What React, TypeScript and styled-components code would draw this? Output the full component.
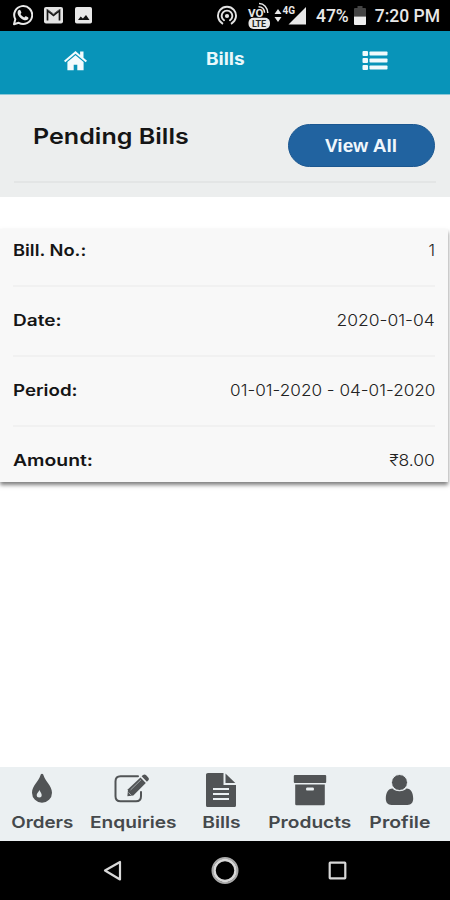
import React from 'react';
import styled, { createGlobalStyle } from 'styled-components';

const Global = createGlobalStyle`
  * { box-sizing: border-box; }
  body { margin: 0; background: #fff; font-family: Inter, 'Liberation Sans', sans-serif; }
  svg { display: block; flex: none; }
`;
const Screen = styled.div`
  width: 450px;
  height: 900px;
  display: flex;
  flex-direction: column;
  background: #fff;
  overflow: hidden;
`;
const Text = styled.span<{ $size: number; $weight: number; $color?: string; $stretch?: number; $origin?: string }>`
  display: inline-block;
  white-space: nowrap;
  font-size: ${p => p.$size}px;
  line-height: 1.2;
  font-weight: ${p => p.$weight};
  color: ${p => p.$color ?? '#151515'};
  transform: scaleX(${p => p.$stretch ?? 1});
  transform-origin: ${p => p.$origin ?? 'center'};
`;
const StatusBar = styled.div`
  height: 31px;
  flex: none;
  background: #000;
  display: flex;
  justify-content: space-between;
  padding: 0 10px 0 12px;
`;
const Cluster = styled.div<{ $gap: number }>`
  display: flex;
  align-items: flex-start;
  gap: ${p => p.$gap}px;
`;
const StatusText = styled.span`
  font: 500 17.5px/32px Roboto, sans-serif;
  color: #e8e8e8;
  white-space: nowrap;
`;
const Header = styled.header`
  height: 64px;
  flex: none;
  background: #0894b9;
  border-bottom: 1px solid #8ac7d7;
  display: grid;
  grid-template-columns: repeat(3, 150px);
  justify-items: center;
  align-items: start;
  padding-top: 18px;
`;
const Pending = styled.section`
  height: 102px;
  flex: none;
  background: #eceeee;
  padding: 29px 14px 0;
`;
const PendingRow = styled.div`
  height: 59px;
  display: flex;
  justify-content: space-between;
  align-items: flex-start;
  padding-left: 19px;
  border-bottom: 2px solid #e3e5e5;
`;
const Title = styled.h1`
  margin: -1px 0 0;
  font-size: 22px;
  line-height: 1.2;
  display: flex;
`;
const ViewAll = styled.button`
  width: 147px;
  height: 43px;
  margin-right: 1px;
  border: 1px solid #1b5790;
  border-radius: 22px;
  background: #2163a0;
  padding: 2px 0 0;
  display: flex;
  align-items: center;
  justify-content: center;
`;
const Card = styled.section`
  width: 448px;
  height: 253px;
  flex: none;
  margin-top: 32px;
  background: #f8f8f8;
  padding: 0 13px;
  box-shadow: 0 3px 4px rgba(0, 0, 0, 0.5);
`;
const Row = styled.div`
  height: 70px;
  display: flex;
  justify-content: space-between;
  align-items: baseline;
  padding-top: 24px;
  border-bottom: 2px solid #f1f1f1;
  &:first-child { height: 58px; padding-top: 12px; }
  &:last-child { height: 55px; border-bottom: 0; }
`;
const Spacer = styled.div`flex: 1;`;
const TabBar = styled.nav`
  height: 74px;
  flex: none;
  background: #ebf0f2;
  display: grid;
  grid-template-columns: 84px 98px 78px 100px 79px;
`;
const Tab = styled.div`
  display: flex;
  flex-direction: column;
  align-items: center;
  gap: 3.5px;
  padding-top: 2px;
`;
const SystemNav = styled.div`
  height: 59px;
  flex: none;
  background: #000;
  display: grid;
  grid-template-columns: 24px 28px 20px;
  gap: 88px;
  justify-content: center;
  align-items: center;
  padding-right: 4px;
`;

const WhatsApp = () => (
  <svg width="21" height="31" viewBox="0 0 21 31" fill="none">
    <path d="M2 24.2 3.3 19.3A9 9 0 1 1 6.7 22.8Z" stroke="#e8e8e8" strokeWidth="2" strokeLinejoin="round" />
    <path d="M6.5 10.3c.8-.8 1.6-.7 2 .2l.8 1.8c.2.5-.1.9-.8 1.7 1 1.8 2 2.6 3.8 3.4.8-1 1.2-1.4 1.7-1.1l2 1c.8.4.5 1.6-.3 2.3-1.8 1.4-4.7.5-7.2-1.7-2.6-2.4-3.9-5.6-2-7.6Z" fill="#e8e8e8" />
  </svg>
);
const Mail = () => (
  <svg width="20" height="31" viewBox="0 0 20 31" fill="none">
    <rect x="0" y="7" width="19" height="16.5" rx="2" fill="#e3e3e3" />
    <path d="M3.5 20.5V10.5l6 5 6-5v10" stroke="#171717" strokeWidth="1.7" />
    <path d="m3.5 9.5 6 4.500 6-4.500" stroke="#555" strokeWidth="1" />
  </svg>
);
const Picture = () => (
  <svg width="18" height="31" viewBox="0 0 18 31">
    <rect x="0" y="7" width="17" height="16.5" rx="1.8" fill="#e8e8e8" />
    <path d="m3 20 2.7-3.6 2.2 2.1 3.1-3.5 3.5 5Z" fill="#111" />
  </svg>
);
const Hotspot = () => (
  <svg width="20" height="31" viewBox="0 0 20 31" fill="none" stroke="#e3e3e3" strokeWidth="1.9" strokeLinecap="round">
    <path d="M5.3 23.4a9 9 0 1 1 9.4 0M7 20.3a5.3 5.3 0 1 1 6 0" />
    <circle cx="10" cy="16" r="2.1" fill="#e3e3e3" stroke="none" />
  </svg>
);
const TinyLabel = styled.text`
  font-family: Roboto, sans-serif;
  font-weight: 700;
`;
const VoLte = () => (
  <svg width="24" height="31" viewBox="0 0 24 31" fill="none">
    <TinyLabel x="1" y="17" fontSize="11.5" fill="#e8e8e8">VO</TinyLabel>
    <path d="M12 3.5c5 0 8.5 4 8.8 9.5M11.5 6.8c3.5 0 5.8 2.5 6.1 6" stroke="#e8e8e8" strokeWidth="1.5" />
    <rect x="1.5" y="17.8" width="21.5" height="11.2" rx="5" fill="#e8e8e8" />
    <TinyLabel x="5" y="26.8" fontSize="9" fill="#222" textLength="14">LTE</TinyLabel>
  </svg>
);
const Signal = () => (
  <svg width="33" height="31" viewBox="0 0 33 31" fill="#e8e8e8">
    <path d="m4 9 3.5 5h-7ZM4 22l3.5-5h-7ZM32 7v17.5H14.5Z" />
    <TinyLabel x="8.5" y="14" fontSize="10" textLength="12.5">4G</TinyLabel>
  </svg>
);
const Battery = () => (
  <svg width="12" height="31" viewBox="0 0 12 31">
    <path d="M3.5 6h5v2H11q1 0 1 1v7.5H0V9q0-1 1-1h2.5Z" fill="#444" />
    <path d="M0 16.5h12V24q0 1-1 1H1q-1 0-1-1Z" fill="#eee" />
  </svg>
);
const Home = () => (
  <svg width="24" height="22" viewBox="0 0 24 22" fill="#f3fbfd">
    <path d="M12.500 2 1 11.700l1.300 1.500L12.500 4.700l10.200 8.500 1.300-1.500-3.500-3V2.500h-3.400v3.400Z" />
    <path d="m12.500 6.200-8.100 6.800v8.200h6.300v-5.500h3.600v5.500h6.300V13Z" />
  </svg>
);
const List = () => (
  <svg width="26" height="23" viewBox="0 0 26 23" fill="#f0fafc">
    {[2, 9, 16].map(y => (
      <g key={y}>
        <rect x="0.5" y={y} width="5.5" height="5" rx="1" />
        <rect x="7.5" y={y + 0.5} width="18" height="4" rx="0.8" />
      </g>
    ))}
  </svg>
);
const Drop = () => (
  <svg width="22" height="40" viewBox="0 0 22 40">
    <path d="M11 4.800c1 0 1.300.7 1.700 2 1.600 5.600 8.300 10.200 8.300 17a10 10 0 0 1-20 0c0-6.800 6.700-11.400 8.300-17 .4-1.300.7-2 1.700-2Z" fill="#515456" />
    <path d="M8.500 21c.5 1.900 2.200 3 2.200 5a2.500 2.500 0 0 1-5 0c0-2 2.200-3.100 2.800-5Z" fill="#e4eaec" />
  </svg>
);
const Edit = () => (
  <svg width="38" height="40" viewBox="0.5 0 38 40" fill="none">
    <path d="M24.500 7.200H7q-5 0-5 5v15.100q0 5 5 5h15.500q5 0 5-5V23" stroke="#515456" strokeWidth="2" strokeLinecap="round" />
    <path d="M14.500 20.300 27 8.400l5.300 5.500-12.500 12.500-5.900.8Z" fill="#515456" />
    <path d="m28.100 7.300 1.400-1.200c1.200-1 2.200-.8 3.200.2l2 2.100c.9 1 1 2 0 3l-1.300 1.400Z" fill="#515456" />
    <path d="m17 21 10.500-10.200M15 23.500l3 3" stroke="#a2a7aa" strokeWidth="1" />
  </svg>
);
const Document = () => (
  <svg width="30" height="40" viewBox="0 0 30 40">
    <path d="M2 4h15.500v12H30v20.500q0 1.500-1.500 1.500h-27Q0 38 0 36.500V5.500Q0 4 2 4Z" fill="#515456" />
    <path d="M19.500 4.500 29.300 14h-9.800Z" fill="#515456" />
    <path d="M7 20h16M7 25h16M7 30h16" stroke="#ebf0f2" strokeWidth="2" />
  </svg>
);
const Archive = () => (
  <svg width="34" height="40" viewBox="0 0 34 40" fill="#515456">
    <rect x="0.8" y="6" width="32.4" height="8" rx="1" />
    <path fillRule="evenodd" d="M2.200 15.500h29.600V35q0 1.300-1.300 1.300H3.500q-1.300 0-1.300-1.300ZM14 18.500q-1 0-1 1.500t1 1.500h6q1 0 1-1.500t-1-1.500Z" />
  </svg>
);
const User = () => (
  <svg width="29" height="40" viewBox="0 0 29 40" fill="#515456">
    <path d="M7.500 19.500c1.800 1.700 4 2.700 7 2.700s5.200-1 7-2.700c4.500 0 6.700 4.300 6.700 10.300 0 3.800-2.200 6.200-5.700 6.200h-16C3 36 .8 33.600.8 29.800c0-6 2.200-10.300 6.700-10.300Z" />
    <circle cx="14.5" cy="13.5" r="8" stroke="#ebf0f2" strokeWidth="1" />
  </svg>
);

const bill: { label: string; stretch: number; value: string; valueStretch: number }[] = [
  { label: 'Bill. No.:', stretch: 1.145, value: '1', valueStretch: 1 },
  { label: 'Date:', stretch: 1.19, value: '2020-01-04', valueStretch: 1.06 },
  { label: 'Period:', stretch: 1.17, value: '01-01-2020 - 04-01-2020', valueStretch: 1.04 },
  { label: 'Amount:', stretch: 1.21, value: '₹8.00', valueStretch: 1.06 },
];
const tabs = [
  { label: 'Orders', stretch: 1.14, Icon: Drop },
  { label: 'Enquiries', stretch: 1.16, Icon: Edit },
  { label: 'Bills', stretch: 1.17, Icon: Document },
  { label: 'Products', stretch: 1.16, Icon: Archive },
  { label: 'Profile', stretch: 1.18, Icon: User },
];

export default function App() {
  return (
    <Screen>
      <Global />
      <StatusBar>
        <Cluster $gap={11}><WhatsApp /><Mail /><Picture /></Cluster>
        <Cluster $gap={9}>
          <Cluster $gap={10}><Hotspot /><Cluster $gap={3}><VoLte /><Signal /></Cluster></Cluster>
          <Cluster $gap={5}><StatusText>47%</StatusText><Battery /></Cluster>
          <StatusText>7:20 PM</StatusText>
        </Cluster>
      </StatusBar>
      <Header>
        <Home />
        <Text $size={17} $weight={700} $color="#e9f8fb" $stretch={1.12}>Bills</Text>
        <List />
      </Header>
      <Pending>
        <PendingRow>
          <Title><Text $size={22} $weight={600} $stretch={1.14} $origin="left">Pending Bills</Text></Title>
          <ViewAll><Text $size={18} $weight={700} $color="#f0f7fc" $stretch={1.06}>View All</Text></ViewAll>
        </PendingRow>
      </Pending>
      <Card>
        {bill.map(b => (
          <Row key={b.label}>
            <Text $size={16} $weight={600} $stretch={b.stretch} $origin="left">{b.label}</Text>
            <Text $size={16.5} $weight={300} $color="#222" $stretch={b.valueStretch} $origin="right">{b.value}</Text>
          </Row>
        ))}
      </Card>
      <Spacer />
      <TabBar>
        {tabs.map(({ label, stretch, Icon }) => (
          <Tab key={label}>
            <Icon />
            <Text $size={16.5} $weight={600} $color="#45494c" $stretch={stretch}>{label}</Text>
          </Tab>
        ))}
      </TabBar>
      <SystemNav>
        <svg width="24" height="28" viewBox="0 0 24 28" fill="none"><path d="M21 5v17.500L6 13.500Z" stroke="#d8d8d8" strokeWidth="2.2" strokeLinejoin="round" /></svg>
        <svg width="28" height="28" viewBox="0 0 28 28" fill="none" stroke="#d8d8d8"><circle cx="14" cy="13.5" r="12.5" stroke="#aaa" strokeWidth="2" /><circle cx="14" cy="13.5" r="10.5" strokeWidth="2.5" /></svg>
        <svg width="20" height="28" viewBox="0 0 20 28" fill="none"><rect x="2.7" y="5.7" width="15.6" height="15.6" rx="0.5" stroke="#d8d8d8" strokeWidth="2.2" /></svg>
      </SystemNav>
    </Screen>
  );
}
